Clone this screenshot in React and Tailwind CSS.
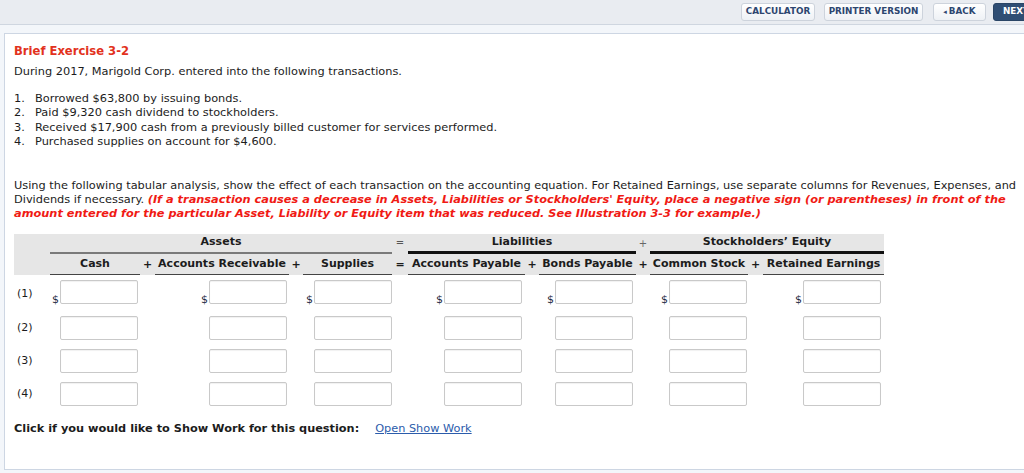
import React from "react";

const font = { fontFamily: '"DejaVu Sans", Verdana, sans-serif' };

const cols = [
  { key: "cash", label: "Cash", w: "w-[90px]", pr: "pr-[2px]" },
  { op: "+" , w: "w-[15px]" },
  { key: "ar", label: "Accounts Receivable", w: "w-[134px]", pr: "pr-[2px]" },
  { op: "+", w: "w-[14px]" },
  { key: "sup", label: "Supplies", w: "w-[89px]", pr: "pr-[0px]" },
  { op: "=", w: "w-[16px]" },
  { key: "ap", label: "Accounts Payable", w: "w-[117px]", pr: "pr-[3px]" },
  { op: "+", w: "w-[14px]" },
  { key: "bp", label: "Bonds Payable", w: "w-[97px]", pr: "pr-[3px]" },
  { op: "+", w: "w-[14px]" },
  { key: "cs", label: "Common Stock", w: "w-[98px]", pr: "pr-[1px]" },
  { op: "+", w: "w-[15px]" },
  { key: "re", label: "Retained Earnings", w: "w-[121px]", pr: "pr-[3px]" },
];

function Btn({ children, dark, className = "" }) {
  return (
    <div
      className={
        "h-[18px] shrink-0 flex items-center justify-center rounded-[3px] text-[8.8px] font-bold " +
        (dark
          ? "bg-[#2f4e74] border border-[#2a4566] text-white "
          : "bg-gradient-to-b from-white to-[#eef1f5] border border-[#cdd3dc] text-[#2d4670] ") +
        className
      }
    >
      {children}
    </div>
  );
}

function Input() {
  return (
    <div className="w-[78px] h-[24px] bg-white border border-[#c9c9c9] rounded-[2px] shadow-[inset_0_1px_1px_rgba(0,0,0,0.06)]" />
  );
}

export default function App() {
  const rows = ["(1)", "(2)", "(3)", "(4)"];
  return (
    <div style={font} className="w-[1024px] h-[473px] overflow-hidden bg-[#f3f6fa] text-[#1c1c1c]">
      <div className="h-[25px] bg-[#e9ecf1] border-b border-[#cfd6e0] flex items-center justify-end gap-[9px] overflow-hidden">
        <Btn className="w-[74px]">CALCULATOR</Btn>
        <Btn className="w-[99px]">PRINTER VERSION</Btn>
        <Btn className="w-[53px] ml-[1px]">
          <span className="text-[7px] mr-[2px]">◂</span>BACK
        </Btn>
        <Btn dark className="w-[48px] -mr-[17px] ml-[-2px] justify-start pl-[9px]">NEXT</Btn>
      </div>

      <div className="ml-[4px] mt-[8px] w-[1040px] h-[437px] bg-white border border-[#cdd6e3] pl-[9px] pt-[10px]">
        <div className="text-[11.6px] leading-[14px] font-bold text-[#e2321d]">Brief Exercise 3-2</div>
        <div className="mt-[6px] text-[11.35px] leading-[14px]">
          During 2017, Marigold Corp. entered into the following transactions.
        </div>
        <div className="mt-[13px] text-[11.35px] leading-[14.4px]">
          {[
            "Borrowed $63,800 by issuing bonds.",
            "Paid $9,320 cash dividend to stockholders.",
            "Received $17,900 cash from a previously billed customer for services performed.",
            "Purchased supplies on account for $4,600.",
          ].map((t, i) => (
            <div key={i} className="flex">
              <span className="w-[21px] shrink-0">{i + 1}.</span>
              <span>{t}</span>
            </div>
          ))}
        </div>

        <div className="mt-[29px] text-[11.35px] leading-[14px] whitespace-nowrap">
          <div>
            Using the following tabular analysis, show the effect of each transaction on the accounting equation. For Retained Earnings, use separate columns for Revenues, Expenses, and
          </div>
          <div>
            Dividends if necessary.{" "}
            <span className="font-bold italic text-[#f01a14]">
              (If a transaction causes a decrease in Assets, Liabilities or Stockholders' Equity, place a negative sign (or parentheses) in front of the
            </span>
          </div>
          <div className="font-bold italic text-[#f01a14]">
            amount entered for the particular Asset, Liability or Equity item that was reduced. See Illustration 3-3 for example.)
          </div>
        </div>

        <table className="mt-[14px] table-fixed border-separate border-spacing-0 text-[11px] w-[870px]">
          <colgroup>
            <col className="w-[36px]" />
            {cols.map((c, i) => (
              <col key={i} className={c.w} />
            ))}
          </colgroup>
          <thead>
            <tr className="bg-[#e6e6e6]">
              <th className="h-[20px]" />
              <th colSpan={5} className="h-[20px] font-bold text-center border-b-2 border-[#7a7a7a] leading-[14px] pb-[1px]">
                Assets
              </th>
              <th className="font-normal text-center text-[#555] align-top pt-[1px] text-[10px]">=</th>
              <th colSpan={3} className="font-bold text-center border-b-[3px] border-[#111] leading-[14px]">
                Liabilities
              </th>
              <th className="font-normal text-center text-[#666] text-[10px]">+</th>
              <th colSpan={3} className="font-bold text-center border-b-[3px] border-[#111] leading-[14px]">
                Stockholders’ Equity
              </th>
            </tr>
            <tr className="bg-[#e6e6e6]">
              <th className="h-[21px]" />
              {cols.map((c, i) =>
                c.op ? (
                  <th key={i} className="font-bold text-center leading-[14px] pt-[1px]">
                    {c.op}
                  </th>
                ) : (
                  <th
                    key={i}
                    className="font-bold text-center whitespace-nowrap border-b border-[#444] leading-[14px] pt-[1px]"
                  >
                    {c.label}
                  </th>
                )
              )}
            </tr>
          </thead>
          <tbody>
            {rows.map((r, ri) => (
              <tr key={r}>
                <td className={"align-top pl-[3px] " + (ri === 0 ? "pt-[11px] h-[36px]" : "pt-[9px] h-[33px]")}>
                  <span className="leading-[14px]">{r}</span>
                </td>
                {cols.map((c, i) =>
                  c.op ? (
                    <td key={i} />
                  ) : (
                    <td key={i} className="align-top pt-[5px]">
                      <div className={"flex justify-end items-end " + c.pr}>
                        {ri === 0 && (
                          <span className="text-[11px] leading-[11px] text-[#1f2a44] mr-[1px] -mb-[1px]">$</span>
                        )}
                        <Input />
                      </div>
                    </td>
                  )
                )}
              </tr>
            ))}
          </tbody>
        </table>

        <div className="mt-[12px] text-[11.3px] leading-[14px] flex">
          <span className="font-bold">Click if you would like to Show Work for this question:</span>
          <span className="ml-[16px] text-[#2b5cab] underline">Open Show Work</span>
        </div>
      </div>
    </div>
  );
}
